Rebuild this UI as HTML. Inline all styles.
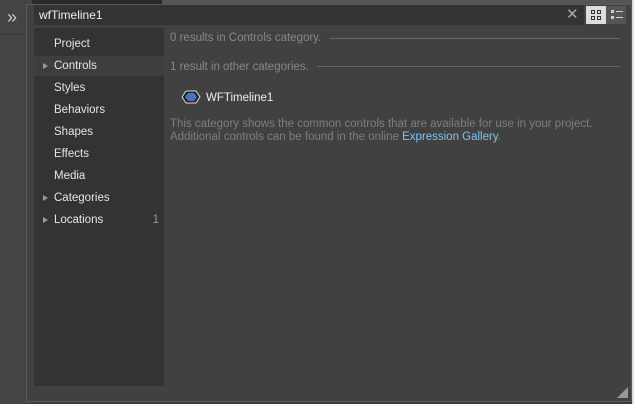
<!DOCTYPE html>
<html><head><style>
body{margin:0;width:634px;height:404px;background:#3c3c3c;position:relative;overflow:hidden;font-family:"Liberation Sans",sans-serif;font-size:11.5px}
div{position:absolute;box-sizing:border-box}
.nav{left:0;width:130px;height:20px;line-height:20px;color:#e6e6e6;padding-left:20px}
.tri{position:absolute;left:9px;top:7px;width:0;height:0;border-left:5px solid #999;border-top:3px solid transparent;border-bottom:3px solid transparent}
</style></head><body>
<div style="left:0;top:0;width:32px;height:404px;background:#444"></div>
<div style="left:0;top:34px;width:32px;height:1px;background:#383838"></div>
<div style="left:7px;top:7px;color:#ccc;font-size:18px;line-height:20px">»</div>
<div style="left:32px;top:0;width:130px;height:4px;background:#2a2a2a"></div>
<div style="left:162px;top:0;width:470px;height:4px;background:#555"></div>
<div style="left:632px;top:0;width:2px;height:404px;background:#ddd"></div>
<div style="left:26px;top:4px;width:606px;height:398px;background:#414141;border:1px solid #5a5a5a"></div>
<div style="left:34px;top:5px;width:550px;height:20px;background:#333;border-radius:2px;color:#eee;line-height:21px;padding-left:5px;font-size:12px">wfTimeline1</div>
<div style="left:566px;top:7px;color:#aaa;font-size:15px;line-height:16px">✕</div>
<div style="left:586px;top:6px;width:20px;height:18px;background:#ddd"></div>
<div style="left:591px;top:10px;width:4px;height:4px;border:1px solid #333"></div>
<div style="left:597px;top:10px;width:4px;height:4px;border:1px solid #333"></div>
<div style="left:591px;top:16px;width:4px;height:4px;border:1px solid #333"></div>
<div style="left:597px;top:16px;width:4px;height:4px;border:1px solid #333"></div>
<div style="left:606px;top:6px;width:20px;height:18px;background:#555"></div>
<div style="left:611px;top:10px;width:3px;height:3px;background:#ccc"></div>
<div style="left:616px;top:11px;width:7px;height:1px;background:#ccc"></div>
<div style="left:611px;top:16px;width:3px;height:3px;background:#ccc"></div>
<div style="left:616px;top:17px;width:7px;height:1px;background:#ccc"></div>
<div style="left:34px;top:28px;width:130px;height:358px;background:#333">
<div class="nav" style="top:6px">Project</div>
<div class="nav" style="top:28px;background:#3e3e3e"><span class="tri"></span>Controls</div>
<div class="nav" style="top:50px">Styles</div>
<div class="nav" style="top:72px">Behaviors</div>
<div class="nav" style="top:94px">Shapes</div>
<div class="nav" style="top:116px">Effects</div>
<div class="nav" style="top:138px">Media</div>
<div class="nav" style="top:160px"><span class="tri"></span>Categories</div>
<div class="nav" style="top:182px"><span class="tri"></span>Locations<span style="position:absolute;right:5px;color:#999">1</span></div>
</div>
<div style="left:170px;top:32px;color:#888">0 results in Controls category.</div>
<div style="left:330px;top:38px;width:290px;height:1px;background:#666"></div>
<div style="left:170px;top:61px;color:#888">1 result in other categories.</div>
<div style="left:317px;top:66px;width:303px;height:1px;background:#666"></div>
<svg style="position:absolute;left:181px;top:90px" width="20" height="14"><polygon points="1,7 5,1 15,1 19,7 15,13 5,13" fill="#222" stroke="#ddd"/><polygon points="4,7 7,3 13,3 16,7 13,11 7,11" fill="#4a6fc4"/></svg>
<div style="left:206px;top:92px;color:#eee">WFTimeline1</div>
<div style="left:170px;top:118px;color:#7e7e7e;line-height:13px">This category shows the common controls that are available for use in your project.<br>Additional controls can be found in the online <span style="color:#7ec3f0">Expression Gallery</span>.</div>
<svg style="position:absolute;left:617px;top:387px" width="12" height="12"><polygon points="11,0 11,11 0,11" fill="#999"/></svg>
</body></html>
